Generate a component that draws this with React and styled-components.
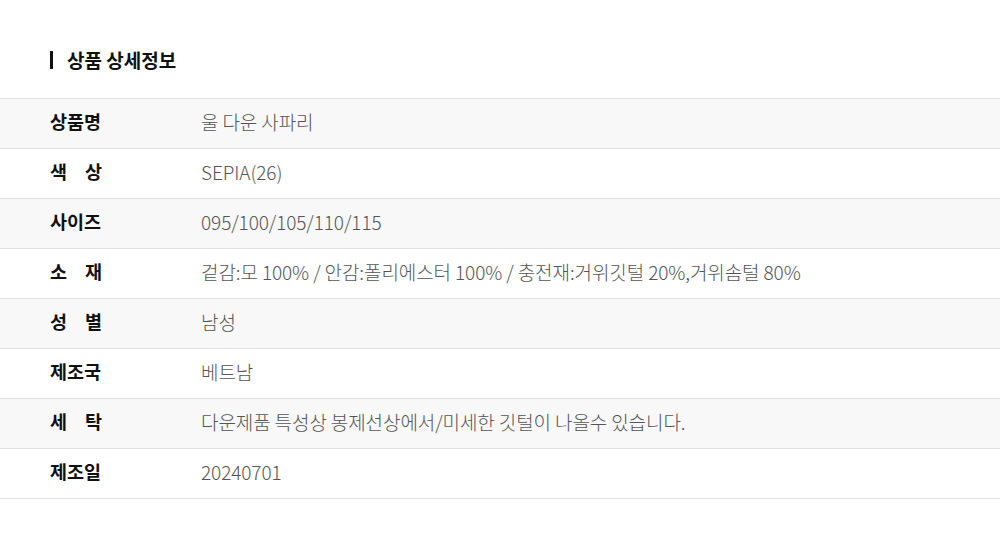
import React from 'react';
import styled, { createGlobalStyle } from 'styled-components';

const rows = [
  { label: ['상품명'], value: '울 다운 사파리' },
  { label: ['색', '상'], value: 'SEPIA(26)' },
  { label: ['사이즈'], value: '095/100/105/110/115' },
  { label: ['소', '재'], value: '겉감:모 100% / 안감:폴리에스터 100% / 충전재:거위깃털 20%,거위솜털 80%' },
  { label: ['성', '별'], value: '남성' },
  { label: ['제조국'], value: '베트남' },
  { label: ['세', '탁'], value: '다운제품 특성상 봉제선상에서/미세한 깃털이 나올수 있습니다.' },
  { label: ['제조일'], value: '20240701' },
];

function App() {
  return (
    <>
      <GlobalStyle />
      <Page>
        <Title>상품 상세정보</Title>
        <Table>
          {rows.map((row, i) => (
            <Row key={i} $striped={i % 2 === 0}>
              <Label>
                {row.label.map((part) => (
                  <span key={part}>{part}</span>
                ))}
              </Label>
              <Value>{row.value}</Value>
            </Row>
          ))}
        </Table>
      </Page>
    </>
  );
}

export default App;

const GlobalStyle = createGlobalStyle`
  body {
    margin: 0;
    background: #fff;
    font-family: "Noto Sans CJK KR", "Noto Sans", sans-serif;
  }
`;

const Page = styled.div`
  width: 1000px;
  height: 548px;
  padding-top: 51px;
  box-sizing: border-box;
`;

const Title = styled.h2`
  margin: 0 0 29px 50px;
  padding-left: 14px;
  border-left: 3px solid #111;
  height: 18px;
  display: flex;
  align-items: center;
  font-size: 19px;
  font-weight: 700;
  color: #111;
  padding-bottom: 1px;
  box-sizing: border-box;
`;

const Table = styled.div`
  border-top: 1px solid #e2e2e2;
`;

const Row = styled.div`
  display: flex;
  align-items: center;
  box-sizing: border-box;
  height: 50px;
  padding: 0 0 5px 50px;
  border-bottom: 1px solid #e2e2e2;
  background: ${(p) => (p.$striped ? '#f8f8f8' : '#fff')};
`;

const Label = styled.div`
  width: 52px;
  margin-right: 99px;
  display: flex;
  justify-content: space-between;
  font-size: 18.5px;
  font-weight: 700;
  color: #111;
`;

const Value = styled.div`
  font-size: 19px;
  font-weight: 300;
  color: #555;
  letter-spacing: -0.1px;
`;
